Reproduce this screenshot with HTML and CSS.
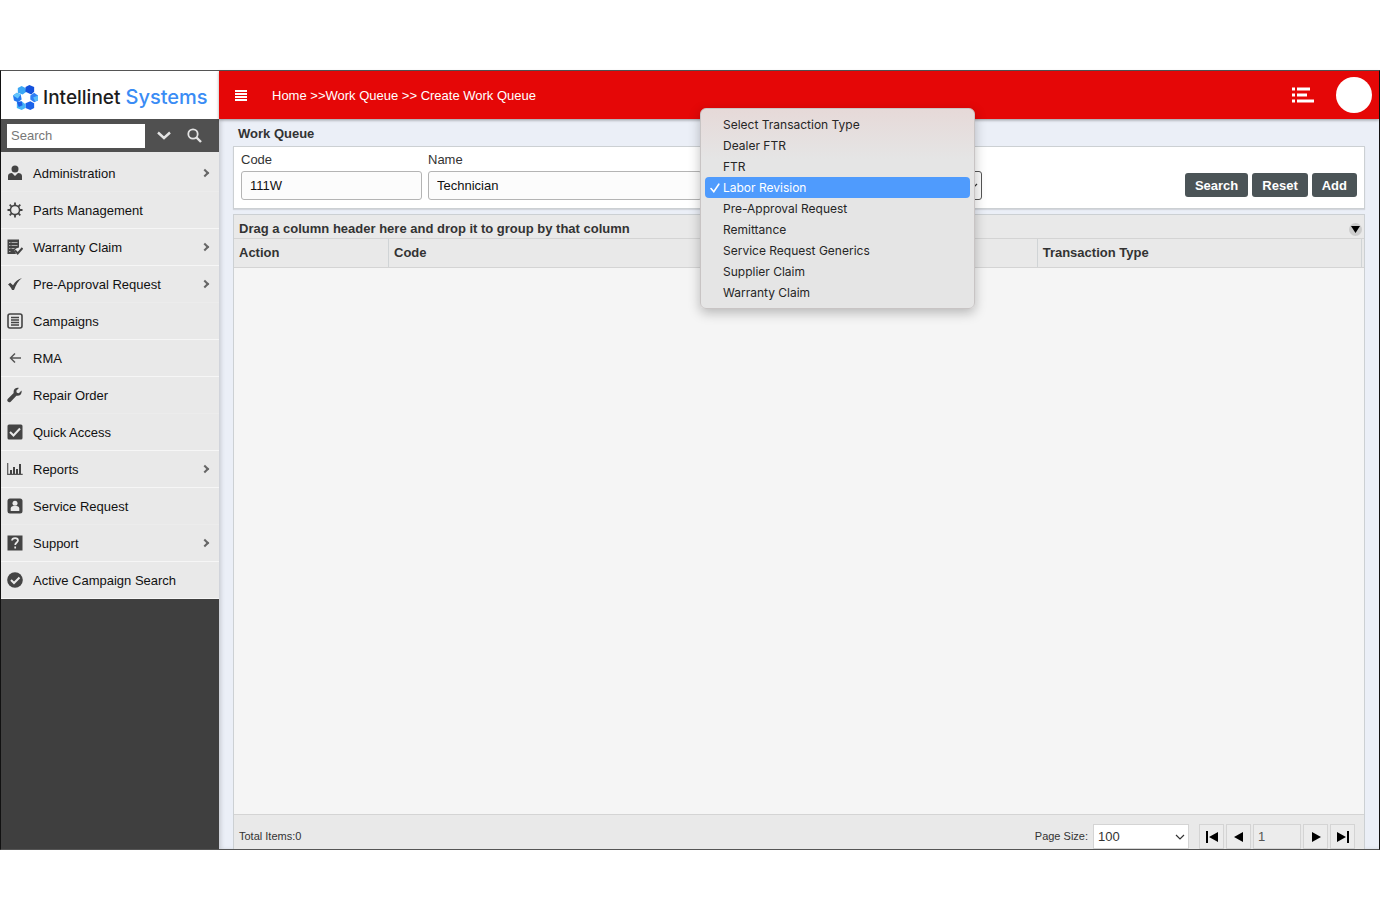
FILE: index.html
```
<!DOCTYPE html>
<html lang="en">
<head>
    <meta charset="UTF-8">
    <meta name="viewport" content="width=device-width, initial-scale=1.0">
    <title>Create Work Queue</title>
    <link rel="stylesheet" href="styles.css">
</head>
<body>
    <div class="app">
        <!-- Sidebar -->
        <aside class="sidebar">
            <a href="#" class="logo">
                <svg class="logo-mark" viewBox="0 0 26 26" aria-hidden="true">
                    <path d="M5 3l4-2 4 2 1 4-4 3-5-2z" fill="#3ba7f5"/>
                    <path d="M13 2l4-2 5 2v5l-3 3-6-3z" fill="#1450dc"/>
                    <path d="M18 11l4-3 4 3v5l-4 2-4-3z" fill="#2f7ff5"/>
                    <path d="M13 19l5-2 4 2v5l-4 2-5-2z" fill="#1a62ea"/>
                    <path d="M4 18l5-1 4 3v4l-4 2-5-2z" fill="#43b4f8"/>
                    <path d="M0 11l4-3 4 2 1 5-4 3-4-2z" fill="#2377f0"/>
                    <path d="M0 11l4-3 4 2-3 4z" fill="#63c5fb"/>
                    <path d="M4 18l5-1 1 4-4 2z" fill="#1c5de6"/>
                    <path d="M21 13l5-2v5l-3 1z" fill="#58bcfa"/>
                </svg>
                <span class="logo-text">Intellinet <span class="logo-accent">Systems</span></span>
            </a>
            <form class="side-search">
                <input type="text" placeholder="Search" aria-label="Search menu">
                <button type="button" aria-label="Options">
                    <svg width="14" height="9" viewBox="0 0 14 9"><path d="M1 1.500l6 5.500 6-5.500" fill="none" stroke="#e4e4e4" stroke-width="2.400"/></svg>
                </button>
                <button type="button" aria-label="Search">
                    <svg width="15" height="15" viewBox="0 0 15 15"><circle cx="6" cy="6" r="4.700" fill="none" stroke="#e4e4e4" stroke-width="1.800"/><path d="M9.500 9.500l4.500 4.500" stroke="#e4e4e4" stroke-width="2.400"/></svg>
                </button>
            </form>
            <nav class="menu">
                <a href="#" class="menu-item has-sub">
                    <svg viewBox="0 0 16 16"><circle cx="8" cy="4" r="3.500"/><path d="M1 15v-4c0-2 1.500-3 4-3l3 3 3-3c2.500 0 4 1 4 3v4z"/></svg>
                    Administration
                </a>
                <a href="#" class="menu-item">
                    <svg viewBox="0 0 16 16"><circle cx="8" cy="8" r="4.600" fill="none" stroke="#444" stroke-width="1.600"/><path d="M8 0.500v3M8 12.500v3M0.500 8h3M12.500 8h3M2.700 2.700l2.100 2.100M11.200 11.200l2.100 2.100M2.700 13.300l2.100-2.100M11.200 4.800l2.100-2.100" stroke="#444" stroke-width="1.800"/></svg>
                    Parts Management
                </a>
                <a href="#" class="menu-item has-sub">
                    <svg viewBox="0 0 16 16"><path d="M0.500 0.500h11.500v8l-3 1-1.500 2 1.500 3.500h-8.500z"/><path d="M2 3.500h1.500M4.500 3.500h6M2 6.500h1.500M4.500 6.500h6M2 9.500h1.500M4.500 9.500h3M2 12.500h1.500" stroke="#aaa"/><path d="M8 11.500l2.700 3 4.800-5.500" fill="none" stroke="#444" stroke-width="2"/></svg>
                    Warranty Claim
                </a>
                <a href="#" class="menu-item has-sub">
                    <svg viewBox="0 0 16 16"><path d="M1 8.500l2.200-1.700 2.800 2.500c2.200-3.800 4.700-6 9-7.300-3.800 3-6 6.500-8 12h-2c-0.700-2-2-3.700-4-5.500z"/></svg>
                    Pre-Approval Request
                </a>
                <a href="#" class="menu-item">
                    <svg viewBox="0 0 16 16"><rect x="1" y="1" width="14" height="14" rx="2" fill="none" stroke="#444" stroke-width="1.600"/><path d="M4 4.500h8M4 7h8M4 9.500h8M4 12h8" stroke="#444" stroke-width="1.400"/></svg>
                    Campaigns
                </a>
                <a href="#" class="menu-item">
                    <svg viewBox="0 0 16 16"><path d="M14 8h-10M8 3.500l-4.500 4.500 4.500 4.500" fill="none" stroke="#555" stroke-width="1.500"/></svg>
                    RMA
                </a>
                <a href="#" class="menu-item">
                    <svg viewBox="0 0 16 16"><path d="M14.500 3.500l-2.700 2.700-2-0.500-0.500-2 2.600-2.700c-3-0.700-6 1.500-5.200 5l-6 6c-1.500 2 1 4.200 3 2.700l5.700-6c3.500 0.800 5.900-2.200 5.100-5.200z"/></svg>
                    Repair Order
                </a>
                <a href="#" class="menu-item">
                    <svg viewBox="0 0 16 16"><rect x="0.500" y="0.500" width="15" height="15" rx="1.500"/><path d="M3 8l3.500 3.500 6.500-7" fill="none" stroke="#e9e9e9" stroke-width="2"/></svg>
                    Quick Access
                </a>
                <a href="#" class="menu-item has-sub">
                    <svg viewBox="0 0 16 16"><path d="M0.700 2v11.300h15" fill="none" stroke="#555" stroke-width="1.200"/><path d="M4 13v-4M7 13v-7M10 13v-5M13 13v-10" stroke="#444" stroke-width="2"/></svg>
                    Reports
                </a>
                <a href="#" class="menu-item">
                    <svg viewBox="0 0 16 16"><rect x="0.500" y="0.500" width="15" height="15" rx="2.500"/><circle cx="8" cy="5.200" r="2.500" fill="#e9e9e9"/><path d="M3.700 13v-2.500c0-1.500 1.300-2.500 2.800-2.500h3c1.500 0 2.800 1 2.800 2.500v2.500z" fill="#e9e9e9"/></svg>
                    Service Request
                </a>
                <a href="#" class="menu-item has-sub">
                    <svg viewBox="0 0 16 16"><rect x="0.500" y="0.500" width="15" height="15"/><path d="M5 5.500c0.300-3.300 6-3.200 6 0 0 2-2.800 2-2.800 4.500M8.200 11.500v2" fill="none" stroke="#e9e9e9" stroke-width="1.700"/></svg>
                    Support
                </a>
                <a href="#" class="menu-item">
                    <svg viewBox="0 0 16 16"><circle cx="8" cy="8" r="7.800"/><path d="M4 8l3 3 5.500-5.500" fill="none" stroke="#e9e9e9" stroke-width="2"/></svg>
                    Active Campaign Search
                </a>
            </nav>
        </aside>

        <div class="content">
            <!-- Top bar -->
            <header class="topbar">
                <button type="button" class="icon-button" aria-label="Toggle menu">
                    <svg width="12" height="12" viewBox="0 0 12 12"><path d="M0 2h12M0 5h12M0 8h12M0 11h12" stroke="#fff" stroke-width="2"/></svg>
                </button>
                <div class="breadcrumb"><a href="#">Home</a> &gt;&gt;<a href="#">Work Queue</a> &gt;&gt; Create Work Queue</div>
                <button type="button" class="icon-button" aria-label="Tasks">
                    <svg width="22" height="16" viewBox="0 0 22 16"><path d="M0 2h3M5 2h13M0 8h3M5 8h10M0 14h3M5 14h17" stroke="#fff" stroke-width="3"/></svg>
                </button>
                <button type="button" class="avatar" aria-label="Account"></button>
            </header>

            <main class="main">
                <h1>Work Queue</h1>

                <form class="filter">
                    <div class="field code-field">
                        <label for="code">Code</label>
                        <input id="code" type="text" value="111W">
                    </div>
                    <div class="field">
                        <label for="name">Name</label>
                        <input id="name" type="text" value="Technician">
                    </div>
                    <div class="field type-field">
                        <select aria-label="Transaction type">
                            <option></option>
                        </select>
                        <!-- Opened list of transaction types -->
                        <ul class="options" role="listbox">
                            <li role="option">Select Transaction Type</li>
                            <li role="option">Dealer FTR</li>
                            <li role="option">FTR</li>
                            <li role="option" class="selected" aria-selected="true">
                                <svg class="tick" width="10" height="10" viewBox="0 0 10 10"><path d="M1 5.500l2.800 3.200 5-7.500" fill="none" stroke="#fff" stroke-width="1.600" stroke-linecap="round"/></svg>
                                Labor Revision
                            </li>
                            <li role="option">Pre-Approval Request</li>
                            <li role="option">Remittance</li>
                            <li role="option">Service Request Generics</li>
                            <li role="option">Supplier Claim</li>
                            <li role="option">Warranty Claim</li>
                        </ul>
                    </div>
                    <div class="actions">
                        <button type="button">Search</button>
                        <button type="button">Reset</button>
                        <button type="button">Add</button>
                    </div>
                </form>

                <section class="grid">
                    <div class="group-bar">
                        <span>Drag a column header here and drop it to group by that column</span>
                        <button type="button" class="column-menu" aria-label="Choose columns">
                            <svg width="9" height="7" viewBox="0 0 9 7"><path d="M0 0h9l-4.500 7z"/></svg>
                        </button>
                    </div>
                    <table>
                        <thead>
                            <tr>
                                <th class="action-col">Action</th>
                                <th>Code</th>
                                <th aria-label="Name"></th>
                                <th>Transaction Type</th>
                            </tr>
                        </thead>
                    </table>
                    <div class="grid-body"></div>
                    <footer class="pager">
                        <span class="total">Total Items:0</span>
                        <label for="pageSize">Page Size:</label>
                        <select id="pageSize">
                            <option>100</option>
                        </select>
                        <div class="page-buttons">
                            <button type="button" aria-label="First page"><svg width="12" height="12" viewBox="0 0 12 12"><path d="M0 0h2v12h-2zM12 1v10l-9-5z"/></svg></button>
                            <button type="button" aria-label="Previous page"><svg width="12" height="12" viewBox="0 0 12 12"><path d="M10 1v10l-9-5z"/></svg></button>
                            <input type="text" value="1" aria-label="Page">
                            <button type="button" aria-label="Next page"><svg width="12" height="12" viewBox="0 0 12 12"><path d="M2 1v10l9-5z"/></svg></button>
                            <button type="button" aria-label="Last page"><svg width="12" height="12" viewBox="0 0 12 12"><path d="M10 0h2v12h-2zM0 1v10l9-5z"/></svg></button>
                        </div>
                    </footer>
                </section>
            </main>
        </div>
    </div>
</body>
</html>
```
FILE: styles.css
```
* {
    box-sizing: border-box;
}

body {
    margin: 0;
    padding: 70px 0;
    background-color: #fff;
    font-family: "Liberation Sans", Arial, sans-serif;
    font-size: 13px;
    color: #333;
}

button,
input,
select {
    font-family: inherit;
    font-size: 13px;
}

button {
    padding: 0;
    border: none;
    background: none;
    cursor: pointer;
}

select {
    appearance: none;
    background: #fff url("data:image/svg+xml,%3Csvg xmlns='http://www.w3.org/2000/svg' width='10' height='6'%3E%3Cpath d='M1 1l4 4 4-4' fill='none' stroke='%23333' stroke-width='1.2'/%3E%3C/svg%3E") no-repeat right 3px center;
}

a {
    color: inherit;
    text-decoration: none;
}

.app {
    display: flex;
    min-height: calc(100vh - 140px);
    border: 1px solid #111;
    border-top-color: #555;
    border-bottom-color: #555;
}

/* Sidebar */
.sidebar {
    width: 218px;
    flex-shrink: 0;
    background-color: #3f3f3f;
}

.logo {
    display: flex;
    align-items: center;
    gap: 4px;
    height: 48px;
    padding: 4px 0 0 11px;
    background-color: #fff;
}

.logo-mark {
    width: 27px;
    height: 25px;
}

.logo-text {
    font-family: Inter, sans-serif;
    font-size: 19px;
    font-weight: 500;
    color: #1c1c1c;
    white-space: nowrap;
}

.logo-accent {
    font-size: 20px;
    color: #3a8cf5;
}

.side-search {
    display: flex;
    align-items: center;
    height: 33px;
    padding-left: 6px;
    background-color: #505050;
}

.side-search input {
    width: 138px;
    height: 24px;
    margin-right: 4px;
    padding: 0 4px;
    border: none;
    background-color: #fff;
}

.side-search input::placeholder {
    color: #777;
}

.side-search button {
    display: flex;
    align-items: center;
    justify-content: center;
    width: 30px;
    height: 30px;
}

.menu {
    padding-top: 3px;
    background-color: #e9e9e9;
}

.menu-item {
    display: flex;
    align-items: center;
    gap: 10px;
    height: 37px;
    padding: 0 11px 0 6px;
    border-bottom: 1px solid #f6f6f6;
    color: #111;
}

.menu-item:nth-child(3n + 1) {
    border-bottom-color: #ececec;
}

.menu-item svg {
    width: 16px;
    height: 16px;
    fill: #444;
}

.has-sub::after {
    content: "";
    width: 6px;
    height: 6px;
    margin-left: auto;
    border: solid #666;
    border-width: 2px 2px 0 0;
    transform: rotate(45deg);
    box-sizing: border-box;
}

/* Top bar */
.content {
    display: flex;
    flex: 1;
    flex-direction: column;
    min-width: 0;
    background-color: #ebeff7;
}

.topbar {
    display: flex;
    align-items: center;
    height: 48px;
    padding: 0 7px 0 16px;
    background-color: #e50707;
    box-shadow: 0 1px 3px rgba(0, 0, 0, 0.35);
    color: #fff;
}

.icon-button {
    display: flex;
}

.breadcrumb {
    flex: 1;
    margin-left: 25px;
}

.avatar {
    width: 36px;
    height: 36px;
    margin-left: 22px;
    border-radius: 50%;
    background-color: #fff;
}

.main {
    display: flex;
    flex: 1;
    flex-direction: column;
    padding: 0 14px;
    box-shadow: inset 3px 0 4px -1px rgba(0, 0, 0, 0.15);
}

h1 {
    margin: 0;
    padding: 2px 0 0 5px;
    font-size: 13px;
    line-height: 25px;
}

/* Filter */
.filter {
    display: flex;
    gap: 6px;
    height: 63px;
    margin-bottom: 5px;
    padding: 5px 7px 8px;
    border: 1px solid #ccd0d3;
    background-color: #fff;
    box-shadow: 0 1px 1px rgba(0, 0, 0, 0.1);
}

.field {
    position: relative;
    display: flex;
    flex-direction: column;
    justify-content: space-between;
    width: 274px;
}

.code-field {
    width: 181px;
}

.field label {
    line-height: 16px;
}

.field input,
.field select {
    width: 100%;
    height: 29px;
    padding: 0 8px;
    border: 1px solid #b4b4b4;
    border-radius: 3px;
    background-color: #fcfcfc;
    color: #111;
}

.type-field {
    justify-content: flex-end;
}

.field select {
    border-color: #555;
}

.options {
    position: absolute;
    top: -44px;
    right: 7px;
    z-index: 10;
    width: 275px;
    margin: 0;
    padding: 5px 4px;
    border: 1px solid #c8c4c4;
    border-radius: 6px;
    background: linear-gradient(#e6d9d8, #e5e5e5 50px);
    box-shadow: 0 4px 12px rgba(0, 0, 0, 0.25);
    font-family: Inter, sans-serif;
    font-size: 12px;
    line-height: 21px;
    color: #262626;
    list-style: none;
}

.options li {
    position: relative;
    padding-left: 18px;
    border-radius: 4px;
}

.options .selected {
    background-color: #4f9bfd;
    color: #fff;
}

.tick {
    position: absolute;
    top: 6px;
    left: 5px;
}

.actions {
    display: flex;
    gap: 4px;
    align-self: flex-end;
    margin: 0 0 3px auto;
}

.actions button {
    height: 24px;
    padding: 0 10px;
    border-radius: 3px;
    background-color: #4b5457;
    color: #fff;
    font-weight: bold;
}

/* Grid */
.grid {
    display: flex;
    flex: 1;
    flex-direction: column;
    border: 1px solid #ccd0d3;
    border-bottom: none;
    background-color: #f5f5f5;
}

.group-bar {
    display: flex;
    align-items: flex-end;
    justify-content: space-between;
    height: 23px;
    padding: 0 2px 0 5px;
    background-color: #e9e9e9;
    font-weight: bold;
    line-height: 18px;
}

.column-menu {
    display: flex;
    align-items: center;
    justify-content: center;
    width: 13px;
    height: 13px;
    margin-bottom: 2px;
    border-radius: 50%;
    background-color: #ccc;
}

.grid table {
    width: 100%;
    border-collapse: separate;
    border-spacing: 0;
    table-layout: fixed;
    padding-right: 2px;
    border-top: 1px solid #d4d4d4;
    border-bottom: 1px solid #d4d4d4;
    background-color: #e9e9e9;
}

.grid th {
    height: 28px;
    padding: 0 5px 2px;
    border-right: 1px solid #d0d4d6;
    text-align: left;
}

.grid .action-col {
    width: 155px;
}

.grid-body {
    flex: 1;
}

.pager {
    display: flex;
    height: 35px;
    padding: 9px 9px 0 5px;
    border-top: 1px solid #d4d4d4;
    background-color: #e9e9e9;
    font-size: 11px;
    line-height: 25px;
}

.total {
    flex: 1;
}

.pager select {
    width: 96px;
    margin: 0 10px 0 5px;
    padding: 0 4px;
    border: 1px solid #d4d4d4;
    color: #333;
}

.page-buttons {
    display: flex;
    gap: 2px;
}

.page-buttons button {
    display: flex;
    align-items: center;
    justify-content: center;
    width: 25px;
    border: 1px solid #d4d4d4;
    background-color: #ececec;
}

.page-buttons input {
    width: 48px;
    padding: 0 4px;
    border: 1px solid #d4d4d4;
    background-color: #ececec;
    color: #555;
}
```
